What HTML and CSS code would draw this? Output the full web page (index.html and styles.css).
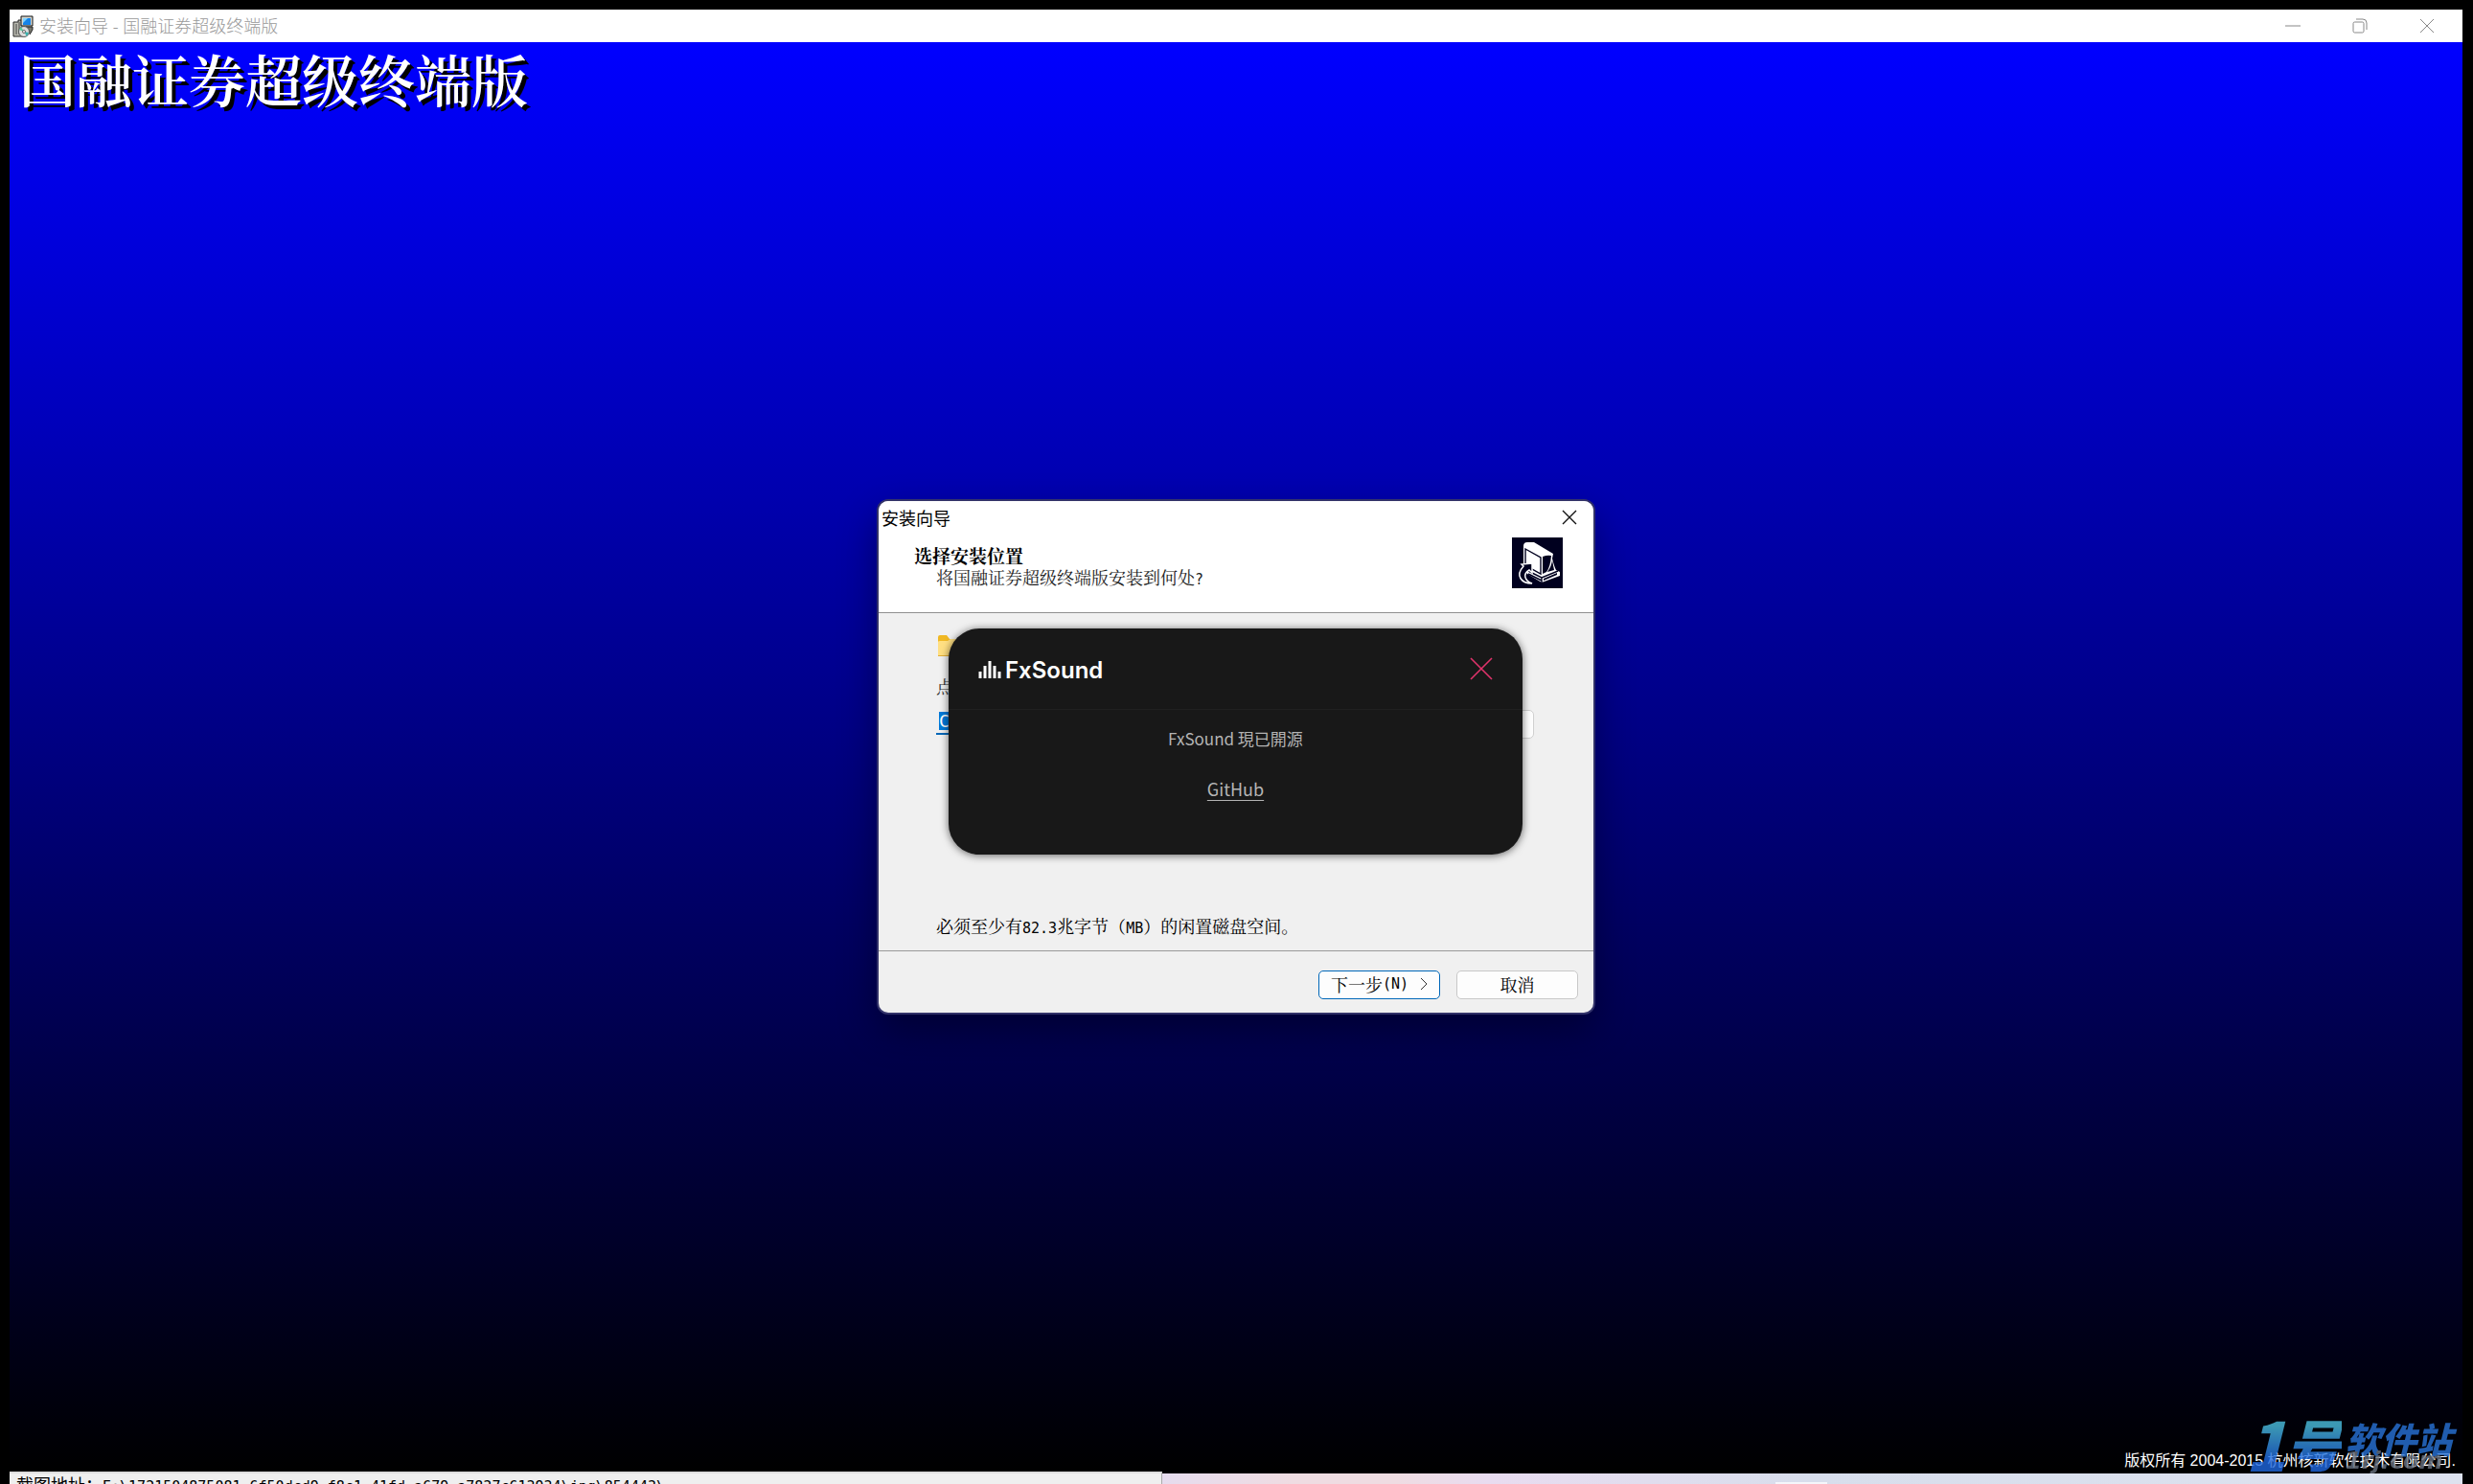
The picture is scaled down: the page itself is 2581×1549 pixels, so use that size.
FILE: index.html
```html
<!DOCTYPE html>
<html lang="zh-CN">
<head>
<meta charset="utf-8">
<title>安装向导 - 国融证券超级终端版</title>
<link rel="stylesheet" href="styles.css">
</head>
<body>
<main class="window">
  <header class="titlebar">
    <svg class="app-icon" viewBox="0 0 22 23" aria-hidden="true">
      <path d="M1 7h5v-2h5v17H1z" fill="#b9b9b0" stroke="#222"/>
      <path d="M4 9v11M7 7v13" stroke="#444"/>
      <path d="M9 1h12v10H9z" fill="#d8d8d0" stroke="#111"/>
      <path d="M11 3h8v7h-8z" fill="#1683e8"/>
      <path d="M11 3h5l-5 5z" fill="#7cd2ff"/>
      <path d="M14 12h7v3l-3 5" fill="#77776e" stroke="#222"/>
      <circle cx="12" cy="17" r="5.500" fill="#ddd" stroke="#555"/>
      <path d="M12 17l-5-2 2-3z" fill="#58c9a0"/><path d="M12 17l5 1-2 4z" fill="#39b4b0"/>
      <circle cx="12" cy="17" r="1.500" fill="#fff" stroke="#666"/>
    </svg>
    <h1 class="titlebar-text">安装向导 - 国融证券超级终端版</h1>
    <div class="controls">
      <button class="control" aria-label="最小化"><svg viewBox="0 0 16 16"><path d="M0 8h16"/></svg></button>
      <button class="control" aria-label="还原"><svg viewBox="0 0 16 16"><rect x="1" y="4" width="11" height="11" rx="1.500"/><path d="M4 1h7a4 4 0 0 1 4 4v7"/></svg></button>
      <button class="control" aria-label="关闭"><svg viewBox="0 0 16 16"><path d="M1 1l14 14M15 1L1 15"/></svg></button>
    </div>
  </header>
  <div class="client">
    <h2 class="product">国融证券超级终端版</h2>
    <section class="dialog" aria-label="安装向导">
      <header class="dialog-head">
        <div class="dialog-title">
          <span>安装向导</span>
          <button class="dialog-close" aria-label="关闭"><svg viewBox="0 0 16 16"><path d="M1 1l14 14M15 1L1 15"/></svg></button>
        </div>
        <div class="dialog-intro">
          <div>
            <h3 class="step">选择安装位置</h3>
            <p class="question">将国融证券超级终端版安装到何处<span class="half">?</span></p>
          </div>
          <svg class="wizard-icon" viewBox="0 0 53 53" aria-hidden="true">
            <path d="M0 0h53v53H0z" fill="#00001f"/>
            <path d="M12 9q0-4 4-4h7l20 12-1 5q2 8 4 12l4 2v4L31 47 16 38l-4-8z" fill="#fff"/>
            <path d="M14 12l16 9v17l-16-9z" fill="#fff" stroke="#00001f" stroke-width="1.400"/>
            <path d="M32 20q5-2 9-1-1 12-5 17l-4 2z" fill="#00001f"/>
            <path d="M42 24c-1 6-3 9-5 12l7-2z" fill="#00001f"/>
            <path d="M13 33l18 9 17-7M17 38l14 7M31 42v5" stroke="#00001f" stroke-width="1.400"/>
            <path d="M33 43l14-6v2l-14 6z" fill="#00001f"/>
            <path d="M21 27v10l-3-3c-7 4-5 11 3 14-11 0-18-8-9-18l-2-2z" fill="#00001f" stroke="#fff" stroke-width="1.500"/>
          </svg>
        </div>
      </header>
      <form class="dialog-body">
        <svg class="folder" viewBox="0 0 26 22" aria-hidden="true">
          <path d="M0 2q0-2 2-2h7l3 4h12v6H0z" fill="#f0b823"/>
          <path d="M0 7q0-1 2-1h8l3-2h11q2 0 2 2v16H0z" fill="#ffdf82"/>
          <path d="M0 21h26v1H0z" fill="#e0ad35"/>
        </svg>
        <label class="hint" for="path">点</label>
        <div class="path-row">
          <input class="path" id="path" type="text" value="C">
          <button class="browse" type="button" aria-label="浏览"></button>
        </div>
        <p class="space">必须至少有<span class="half">82.3</span>兆字节（<span class="half">MB</span>）的闲置磁盘空间。</p>
      </form>
      <footer class="dialog-foot">
        <button class="btn btn-default">下一步<span class="half">(N)</span><svg class="chevron" viewBox="0 0 8 14" aria-hidden="true"><path d="M1 1l6 6-6 6"/></svg></button>
        <button class="btn">取消</button>
      </footer>

      <aside class="toast">
        <header class="toast-head">
          <svg class="bars" viewBox="0 0 24 20" aria-hidden="true"><path d="M2 20v-7M7 20v-13M12 20V2M17 20V7M22 20v-7"/></svg>
          <span class="brand">FxSound</span>
          <button class="toast-close" aria-label="关闭"><svg viewBox="0 0 24 24"><path d="M1 1l22 22M23 1L1 23"/></svg></button>
        </header>
        <p class="toast-text">FxSound 現已開源</p>
        <a class="toast-link" href="#github">GitHub</a>
      </aside>
    </section>
    <p class="copyright">版权所有 2004-2015 杭州核新软件技术有限公司.</p>
  </div>
</main>
<footer class="strip">
  <div class="strip-path">截图地址：<span class="half">E:\1721504875081-6f50dcd9-f8c1-41fd-a679-a7837c613934\jpg\854443\</span></div>
  <div class="strip-rest"><span class="strip-tab"></span></div>
</footer>
<div class="watermark">
  <span class="mark-one">1</span><span class="mark-hao">号</span>
  <div class="mark-side"><span class="mark-name">软件站</span><span class="mark-site">1rj.com</span></div>
</div>
</body>
</html>
```
FILE: styles.css
```css
* { box-sizing: border-box; }
body {
  margin: 0;
  height: 100vh;
  padding: 10px 11px 0 10px;
  display: flex;
  flex-direction: column;
  overflow: hidden;
  position: relative;
  background: #000;
  font: 18px/22px "Liberation Sans", "Noto Sans CJK SC", sans-serif;
}
h1, h2, h3, p { margin: 0; font-weight: 400; }
button { margin: 0; padding: 0; border: 0; background: none; font: inherit; color: inherit; }
svg { display: block; fill: none; }

.window { flex: 1; display: flex; flex-direction: column; min-height: 0; }
.titlebar {
  height: 34px;
  flex: none;
  padding: 0 2px 0 3px;
  display: flex;
  align-items: center;
  gap: 6px;
  background: #fff;
  color: #999;
}
.app-icon { width: 22px; height: 23px; }
.titlebar-text { flex: 1; font: 300 18px/22px "Noto Sans", "Noto Sans CJK SC", sans-serif; }
.controls { display: flex; }
.control { width: 70px; height: 34px; display: grid; place-items: center; }
.control svg { width: 16px; height: 16px; stroke: #888; }
.client {
  flex: 1;
  display: grid;
  background: linear-gradient(#00f, #000);
}
.client > * { grid-area: 1 / 1; }
.product {
  place-self: start;
  padding-left: 10px;
  font: 600 59px/76px "Noto Serif CJK SC", "Noto Sans CJK SC", serif;
  color: #fff;
  text-shadow: 4px 4px 0 #000;
}
.copyright { place-self: end; padding-right: 7px; font-size: 16px; color: #fff; }

.dialog {
  place-self: center;
  position: relative;
  width: 746px;
  border-radius: 10px;
  background: #f0f0f0;
  box-shadow: 0 0 0 2px #33336a, 0 16px 40px rgba(0, 0, 0, .4);
  font-family: "Noto Serif CJK SC", "Noto Sans CJK SC", serif;
}
.half { font-family: "DejaVu Sans Mono", monospace; font-size: 15px; }
.dialog-head { height: 117px; border-bottom: 1px solid #8f8f8f; border-radius: 10px 10px 0 0; background: #fff; }
.dialog-title {
  height: 34px;
  padding: 0 17px 0 3px;
  display: flex;
  align-items: center;
  justify-content: space-between;
  font-family: "Noto Sans CJK SC", sans-serif;
}
.dialog-close svg { width: 16px; height: 16px; stroke: #111; stroke-width: 1.4; }
.dialog-intro { padding: 4px 32px 0 37px; display: flex; justify-content: space-between; }
.step { padding-top: 8px; font-size: 19px; line-height: 22px; font-weight: 700; }
.question { padding-left: 23px; color: #222; }
.wizard-icon { width: 53px; height: 53px; }
.dialog-body { height: 352px; padding: 23px 62px 0 60px; display: flex; flex-direction: column; }
.folder { width: 26px; height: 22px; margin-left: 2px; flex: none; }
.hint { margin-top: 20px; color: #333; }
.path-row { margin-top: 14px; display: flex; justify-content: space-between; }
.path {
  width: 480px;
  height: 26px;
  margin: 0;
  padding: 2px 3px 3px;
  border: 0;
  border-bottom: 2px solid #0067b8;
  background: #0078d7 content-box;
  color: #fff;
  font: 18px/20px "DejaVu Sans Mono", monospace;
  outline: 0;
}
.browse { width: 90px; height: 30px; border: 1px solid #d0d0d0; border-radius: 5px; background: #fdfdfd; }
.space { margin-top: auto; padding-bottom: 12px; }
.dialog-foot {
  height: 65px;
  padding: 20px 16px 0;
  display: flex;
  justify-content: flex-end;
  align-items: flex-start;
  gap: 17px;
  border-top: 1px solid #999;
}
.btn {
  width: 127px;
  height: 30px;
  padding-bottom: 2px;
  display: flex;
  align-items: center;
  justify-content: center;
  border: 1px solid #c8c8c8;
  border-radius: 5px;
  background: #fdfdfd;
}
.btn-default { border-color: #0067b8; }
.chevron { width: 8px; height: 14px; margin-left: 12px; stroke: #333; }

.toast {
  position: absolute;
  left: 73px;
  top: 133px;
  width: 599px;
  height: 236px;
  border-radius: 32px;
  background: #181818;
  box-shadow: 0 1px 8px rgba(0, 0, 0, .6);
  color: #b4b4b4;
  font-family: "Noto Sans CJK TC", sans-serif;
  text-align: center;
}
.toast-head {
  height: 85px;
  padding: 0 31px;
  display: flex;
  align-items: center;
  gap: 4px;
  border-bottom: 1px solid #202020;
}
.bars { width: 24px; height: 20px; stroke: #fff; stroke-width: 3; }
.brand { flex: 1; padding-top: 3px; text-align: left; font: 600 24px/30px Inter, sans-serif; color: #fff; }
.toast-close svg { width: 24px; height: 24px; stroke: #e0336b; stroke-width: 1.6; }
.toast-text { padding: 19px 0 30px; font-size: 17px; }
.toast-link { color: inherit; text-underline-offset: 4px; }

.strip { height: 13px; flex: none; display: flex; align-items: flex-end; }
.strip-path {
  width: 47%;
  height: 13px;
  padding: 2px 7px 0;
  overflow: hidden;
  background: #efefef;
  border-top: 2px solid #ddd;
  border-right: 1px solid #aaa;
  color: #000;
  white-space: nowrap;
}
.strip-rest {
  flex: 1;
  height: 11px;
  padding-left: 25%;
  display: flex;
  align-items: flex-end;
  background: linear-gradient(90deg, #e6dcee, #efdce2 10%, #efdce2 18%, #e9dcf0 25%, #d8deec 50%, #dde2ef);
}
.strip-tab { width: 54px; height: 2px; background: #f5f6fb; }

.watermark {
  position: absolute;
  right: 22px;
  bottom: 7px;
  height: 72px;
  display: flex;
  align-items: flex-start;
  opacity: .8;
  font-family: "Noto Sans CJK SC", sans-serif;
  font-weight: 900;
  font-style: italic;
  color: #2874d8;
}
.mark-one, .mark-hao {
  background: linear-gradient(#4cc0e0 25%, #2068e0 75%);
  background-clip: text;
  color: transparent;
}
.mark-one { font-size: 70px; line-height: 72px; }
.mark-hao { font-size: 58px; line-height: 72px; }
.mark-side { display: flex; flex-direction: column; padding-left: 4px; }
.mark-name { font-size: 37px; line-height: 62px; height: 48px; }
.mark-site { font: italic 700 24px/14px "DejaVu Sans", sans-serif; color: #6a7280; }
```
